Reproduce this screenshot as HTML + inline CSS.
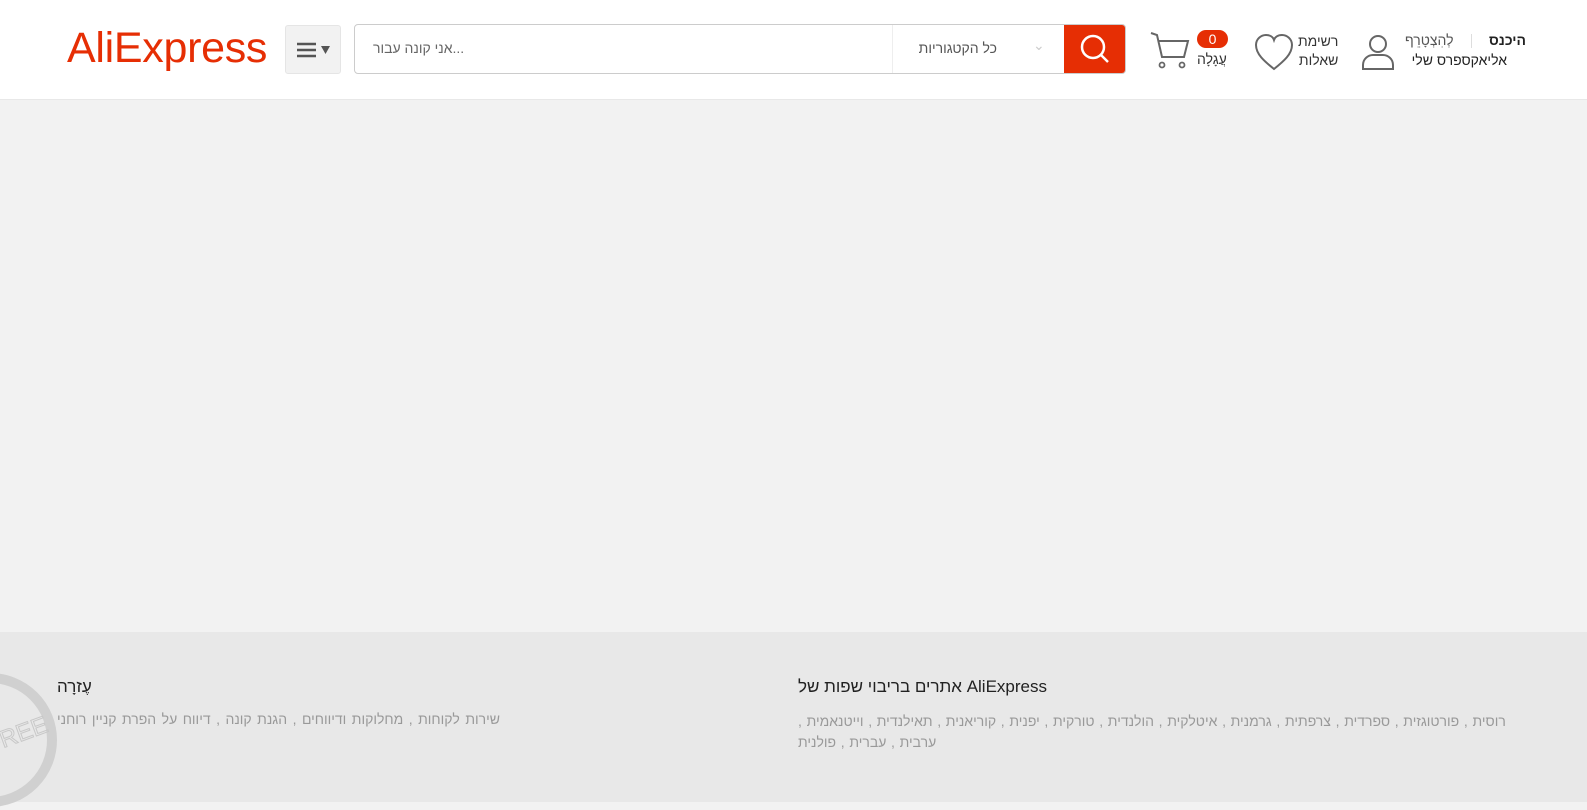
<!DOCTYPE html>
<html><head><meta charset="utf-8"><style>
*{margin:0;padding:0;box-sizing:border-box}
body{width:1587px;height:802px;overflow:hidden;background:#f2f2f2;font-family:"Liberation Sans","Noto Sans CJK SC",sans-serif;position:relative}
.hdr{position:absolute;top:0;left:0;width:1587px;height:100px;background:#fff;border-bottom:1px solid #e8e8e8}
.logo{position:absolute;left:67px;top:23px;font-size:43px;color:#e62e04;letter-spacing:-0.3px;font-family:"Liberation Sans",sans-serif;line-height:50px}
.menu{position:absolute;left:285px;top:25px;width:56px;height:49px;background:#f2f2f2;border:1px solid #e5e5e5;border-radius:3px}
.search{position:absolute;left:354px;top:24px;width:772px;height:50px;border:1px solid #ccc;border-radius:4px;background:#fff;overflow:hidden}
.ph{position:absolute;left:18px;top:15px;font-size:14px;color:#666;direction:rtl}
.cat{position:absolute;left:537px;top:0;width:173px;height:48px;border-left:1px solid #eee;font-size:14px;color:#555;direction:rtl}
.btn{position:absolute;right:0;top:0;width:61px;height:48px;background:#e62e04}
.t{position:absolute;font-size:14px;color:#333;direction:rtl;white-space:nowrap}
.foot{position:absolute;top:632px;left:0;width:1587px;height:170px;background:#e8e8e8}
</style></head><body>
<div class="hdr">
<div class="logo">AliExpress</div>
<div class="menu"><svg width="56" height="49"><g stroke="#555" stroke-width="2.5"><line x1="11" y1="18" x2="30" y2="18"/><line x1="11" y1="24" x2="30" y2="24"/><line x1="11" y1="30" x2="30" y2="30"/></g><path d="M35 20h9l-4.5 8z" fill="#555"/></svg></div>
<div class="search">
<div class="ph">...אני קונה עבור</div>
<div class="cat"><span style="position:absolute;right:68px;top:15px">כל הקטגוריות</span><span style="position:absolute;left:140px;top:12px;color:#ccc">&#8964;</span></div>
<div class="btn"><svg width="61" height="48"><circle cx="29" cy="22" r="11" fill="none" stroke="#fff" stroke-width="2.5"/><line x1="37" y1="30" x2="44" y2="37" stroke="#fff" stroke-width="2.5"/></svg></div>
</div>
<svg style="position:absolute;left:1148px;top:30px" width="42" height="42"><path d="M3 3l6 2 5 22h22l4-16H11" fill="none" stroke="#666" stroke-width="2"/><circle cx="14" cy="35" r="2.5" fill="none" stroke="#666" stroke-width="1.8"/><circle cx="34" cy="35" r="2.5" fill="none" stroke="#666" stroke-width="1.8"/></svg>
<div style="position:absolute;left:1197px;top:30px;width:31px;height:18px;background:#e62e04;border-radius:9px;color:#fff;font-size:14px;text-align:center;line-height:18px">0</div>
<div class="t" style="left:1197px;top:51px">עֲגָלָה</div>
<svg style="position:absolute;left:1254px;top:33px" width="40" height="40"><path d="M20 36C10 28 2 21 2 12 2 6 7 2 12 2c4 0 7 2 8 5 1-3 4-5 8-5 5 0 10 4 10 10 0 9-8 16-18 24z" fill="none" stroke="#666" stroke-width="2"/></svg>
<div class="t" style="left:1298px;top:32px;line-height:19px;text-align:right">רשימת<br>שאלות</div>
<svg style="position:absolute;left:1360px;top:32px" width="36" height="40"><circle cx="18" cy="12" r="8" fill="none" stroke="#666" stroke-width="2"/><path d="M3 37v-4c0-6 5-10 10-10h10c5 0 10 4 10 10v4z" fill="none" stroke="#666" stroke-width="2"/></svg>
<div class="t" style="right:61px;top:32px;font-weight:bold;color:#222">היכנס</div>
<div style="position:absolute;left:1471px;top:34px;width:1px;height:14px;background:#ddd"></div>
<div class="t" style="left:1405px;top:32px;color:#555">לְהִצְטָרֵף</div>
<div class="t" style="right:80px;top:52px;color:#222">אליאקספרס שלי</div>
</div>
<div class="foot">
<svg style="position:absolute;left:-60px;top:28px" width="120" height="150"><circle cx="50" cy="80" r="62" fill="none" stroke="#d0d0d0" stroke-width="10"/><text x="45" y="92" font-size="24" fill="none" stroke="#c8c8c8" font-family="Liberation Sans" transform="rotate(-20 50 80)">FREE</text></svg>
<div class="t" style="left:798px;top:45px;font-size:17px;color:#222">AliExpress אתרים בריבוי שפות של</div>
<div class="t" style="left:798px;top:79px;color:#999;width:740px;line-height:21px;text-align:left;word-spacing:0.8px">רוסית , פורטוגזית , ספרדית , צרפתית , גרמנית , איטלקית , הולנדית , טורקית , יפנית , קוריאנית , תאילנדית , וייטנאמית ,<br>ערבית , עברית , פולנית</div>
<div class="t" style="left:57px;top:45px;font-size:17px;color:#222">עֶזרָה</div>
<div class="t" style="left:57px;top:79px;color:#999;width:450px;text-align:left;word-spacing:1.6px">שירות לקוחות , מחלוקות ודיווחים , הגנת קונה , דיווח על הפרת קניין רוחני</div>
</div>
</body></html>
